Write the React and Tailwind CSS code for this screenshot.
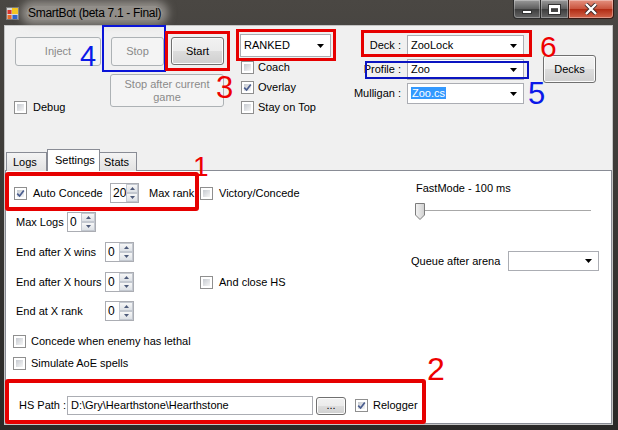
import React from "react";

const BTN =
  "flex items-center justify-center rounded-[3px] border border-[#707070] bg-[linear-gradient(#f2f2f2_0%,#ebebeb_50%,#dddddd_50%,#cfcfcf_100%)] shadow-[inset_0_0_0_1px_#fcfcfc] text-black";
const BTN_OFF =
  "flex items-center justify-center rounded-[3px] border border-[#adb2b5] bg-[#f4f4f4] text-[#8a8a8a] text-center";

function Check({ on }) {
  return (
    <span className="flex h-[13px] w-[13px] shrink-0 border border-[#8f8f8f] bg-white p-[2px]">
      <span className="relative flex h-full w-full bg-linear-to-br from-[#c6cad0] to-[#f6f6f6]">
        {on && (
          <svg className="absolute -left-[1px] -top-[1px]" width="9" height="9" viewBox="0 0 9 9">
            <path d="M1.2 4.6 L3.6 7 L7.8 1.4" stroke="#4a5d8f" strokeWidth="1.7" fill="none" />
          </svg>
        )}
      </span>
    </span>
  );
}

function Arrow() {
  return (
    <svg width="7" height="4" viewBox="0 0 7 4" className="shrink-0">
      <path d="M0 0H7L3.5 4Z" fill="#000" />
    </svg>
  );
}

function Combo({ children, className }) {
  return (
    <div className={`flex items-center border border-[#abadb3] bg-white pr-[6px] ${className}`}>
      <div className="flex-1 pl-[3px]">{children}</div>
      <Arrow />
    </div>
  );
}

function SpinBtn({ up }) {
  return (
    <div className="flex flex-1 items-center justify-center border border-[#c3c8d0] bg-linear-to-b from-[#f7f7f7] to-[#dde1e6]">
      <svg width="5" height="3" viewBox="0 0 5 3">
        <path d={up ? "M0 3H5L2.5 0Z" : "M0 0H5L2.5 3Z"} fill="#4e5b7a" />
      </svg>
    </div>
  );
}

function Spin({ value }) {
  return (
    <div className="flex h-[20px] w-[29px] shrink-0 border border-[#abadb3] bg-white">
      <span className="flex-1 pl-[2px] text-[12px] leading-[18px]">{value}</span>
      <div className="flex w-[14px] flex-col">
        <SpinBtn up />
        <SpinBtn />
      </div>
    </div>
  );
}

export default function App() {
  return (
    <div className="relative h-[430px] w-[618px] overflow-hidden bg-linear-to-b from-[#4a4743] to-[#2a2927] font-['Liberation_Sans',Arial,sans-serif] text-[11px] leading-[13px] text-black">
      {/* title bar */}
      <div className="flex h-[25px] items-start">
        <svg className="ml-[6px] mt-[7px]" width="13" height="13" viewBox="0 0 13 13">
          <rect x="0.5" y="0.5" width="12" height="12" fill="#d8d8d8" stroke="#7a7a7a" />
          <rect x="6" y="1" width="6" height="6" fill="#f4c51c" />
          <rect x="1.5" y="3" width="4" height="4" fill="#d9342b" />
          <rect x="1.5" y="8" width="4" height="4" fill="#e86a2a" />
          <rect x="6.5" y="8" width="5" height="4" fill="#2f63c8" />
        </svg>
        <span className="ml-[7px] mt-[6px] rounded-full bg-[rgba(205,202,196,0.55)] px-[2px] text-[12px] leading-[14px] tracking-[-0.3px] shadow-[0_0_8px_5px_rgba(205,202,196,0.55)]">
          SmartBot (beta 7.1 - Final)
        </span>
        <div className="ml-auto mr-[4px] flex h-[19px]">
          <div className="flex w-[28px] items-center justify-center rounded-bl-[4px] border border-t-0 border-[#2b2b2b] bg-[linear-gradient(#9a9a9a,#5c5c5c_50%,#3c3c3c_50%,#666)] shadow-[inset_0_0_0_1px_rgba(255,255,255,0.3)]">
            <span className="mt-[6px] h-[4px] w-[10px] border border-[#333] bg-white" />
          </div>
          <div className="flex w-[27px] items-center justify-center border-b border-[#2b2b2b] bg-[linear-gradient(#9a9a9a,#5c5c5c_50%,#3c3c3c_50%,#666)] shadow-[inset_0_0_0_1px_rgba(255,255,255,0.3)]">
            <span className="h-[9px] w-[11px] border-[2px] border-t-[3px] border-white outline outline-[#333]" />
          </div>
          <div className="flex w-[46px] items-center justify-center rounded-br-[4px] border border-t-0 border-[#3a1a14] bg-[linear-gradient(#e4917f,#c9533c_50%,#b02a12_50%,#d2644a)] shadow-[inset_0_0_0_1px_rgba(255,255,255,0.35)]">
            <svg width="14" height="12" viewBox="0 0 14 12">
              <path d="M2 1L12 11M12 1L2 11" stroke="#3a2a2a" strokeWidth="4" />
              <path d="M2 1L12 11M12 1L2 11" stroke="#fff" strokeWidth="2.4" />
            </svg>
          </div>
        </div>
      </div>

      {/* client area */}
      <div className="ml-[4px] flex h-[400px] w-[609px] flex-col border border-[#c4c4c4] bg-[#f0f0f0]">
        {/* top controls */}
        <div className="flex h-[123px] items-start">
          <div className="ml-[9px] flex w-[87px] flex-col">
            <div className={`${BTN_OFF} ml-[1px] mt-[11px] h-[29px] w-[86px]`}>Inject</div>
            <div className="mt-[35px] flex items-center">
              <Check />
              <span className="ml-[6px]">Debug</span>
            </div>
          </div>

          <div className="ml-[9px] flex w-[114px] flex-col">
            <div className="mt-[11px] flex">
              <div className={`${BTN_OFF} ml-[1px] h-[29px] w-[53px]`}>Stop</div>
              <div className={`${BTN} ml-[7px] h-[28px] w-[53px]`}>Start</div>
            </div>
            <div className={`${BTN_OFF} mt-[8px] h-[33px] w-[114px] leading-[13px]`}>
              Stop after current
              <br />
              game
            </div>
          </div>

          <div className="ml-[16px] flex w-[91px] flex-col">
            <Combo className="mt-[8px] h-[23px]">RANKED</Combo>
            <div className="ml-[1px] mt-[4px] flex items-center">
              <Check />
              <span className="ml-[4px]">Coach</span>
            </div>
            <div className="ml-[1px] mt-[7px] flex items-center">
              <Check on />
              <span className="ml-[4px]">Overlay</span>
            </div>
            <div className="ml-[1px] mt-[7px] flex items-center">
              <Check />
              <span className="ml-[4px]">Stay on Top</span>
            </div>
          </div>

          <div className="ml-[20px] mt-[9px] flex flex-col gap-[3px]">
            {[
              ["Deck :", "ZooLock"],
              ["Profile :", "Zoo"],
              ["Mulligan :", null],
            ].map(([label, value]) => (
              <div key={label} className="flex h-[21px] items-center">
                <span className="w-[50px] whitespace-nowrap text-right">{label}</span>
                <Combo className="ml-[6px] h-[21px] w-[117px]">
                  {value ?? <span className="bg-[#3399ff] px-[1px] text-white">Zoo.cs</span>}
                </Combo>
              </div>
            ))}
          </div>

          <div className={`${BTN} ml-[19px] mt-[29px] h-[28px] w-[53px]`}>Decks</div>
        </div>

        {/* tabs */}
        <div className="relative z-10 flex h-[21px] items-end pl-[1px]">
          <div className="-mb-px flex h-[19px] w-[41px] items-center border border-b-0 border-[#898c95] bg-linear-to-b from-[#f4f4f4] to-[#e2e2e2] pl-[6px]">
            Logs
          </div>
          <div className="-mb-px flex h-[22px] w-[53px] items-center border border-b-0 border-[#898c95] bg-white pl-[7px]">
            Settings
          </div>
          <div className="-mb-px flex h-[19px] w-[37px] items-center border border-b-0 border-l-0 border-[#898c95] bg-linear-to-b from-[#f4f4f4] to-[#e2e2e2] pl-[4px]">
            Stats
          </div>
        </div>

        {/* tab page */}
        <div className="flex flex-1 flex-col border border-[#898c95] bg-white">
          <div className="flex flex-1">
            <div className="flex w-[405px] flex-col">
              <div className="mt-[12px] flex h-[20px] items-center pl-[8px]">
                <Check on />
                <span className="ml-[6px] w-[77px]">Auto Concede</span>
                <Spin value="20" />
                <span className="ml-[10px] w-[51px]">Max rank</span>
                <Check />
                <span className="ml-[6px]">Victory/Concede</span>
              </div>
              <div className="mt-[9px] flex h-[20px] items-center pl-[10px]">
                <span className="w-[51px]">Max Logs</span>
                <Spin value="0" />
              </div>
              <div className="mt-[10px] flex h-[20px] items-center pl-[10px]">
                <span className="w-[89px]">End after X wins</span>
                <Spin value="0" />
              </div>
              <div className="mt-[10px] flex h-[20px] items-center pl-[10px]">
                <span className="w-[89px]">End after X hours</span>
                <Spin value="0" />
                <span className="ml-[66px]">
                  <Check />
                </span>
                <span className="ml-[6px]">And close HS</span>
              </div>
              <div className="mt-[9px] flex h-[20px] items-center pl-[10px]">
                <span className="w-[89px]">End at X rank</span>
                <Spin value="0" />
              </div>
              <div className="mt-[14px] flex h-[13px] items-center pl-[7px]">
                <Check />
                <span className="ml-[5px]">Concede when enemy has lethal</span>
              </div>
              <div className="mt-[9px] flex h-[13px] items-center pl-[7px]">
                <Check />
                <span className="ml-[5px]">Simulate AoE spells</span>
              </div>
            </div>

            <div className="flex flex-1 flex-col">
              <span className="ml-[5px] mt-[11px]">FastMode - 100 ms</span>
              <div className="relative ml-[4px] mt-[8px] h-[17px] w-[176px]">
                <div className="absolute left-[1px] right-0 top-[7px] h-[2px] border-t border-[#a8a8a8] bg-white" />
                <svg className="absolute left-0 top-0" width="10" height="17" viewBox="0 0 10 17">
                  <defs>
                    <linearGradient id="th" x1="0" y1="0" x2="1" y2="0">
                      <stop offset="0" stopColor="#f4f4f4" />
                      <stop offset="1" stopColor="#cfcfcf" />
                    </linearGradient>
                  </defs>
                  <path d="M0.5 0.5H9.5V12L5 16.5L0.5 12Z" fill="url(#th)" stroke="#7c7c7c" />
                </svg>
              </div>
              <div className="mt-[31px] flex h-[20px] items-center">
                <span className="w-[97px]">Queue after arena</span>
                <Combo className="h-[20px] w-[91px]" />
              </div>
            </div>
          </div>

          <div className="mb-[8px] flex h-[19px] items-center pl-[13px]">
            <span className="w-[48px]">HS Path :</span>
            <div className="flex h-[19px] w-[246px] items-center border border-[#abadb3] bg-white pl-[3px]">
              D:\Gry\Hearthstone\Hearthstone
            </div>
            <div className={`${BTN} ml-[3px] h-[18px] w-[30px] leading-none`}>...</div>
            <span className="ml-[9px]">
              <Check on />
            </span>
            <span className="ml-[5px]">Relogger</span>
          </div>
        </div>
      </div>

      {/* annotations */}
      <div className="absolute left-[102px] top-[25px] h-[47px] w-[64px] border-2 border-[#0a14d8]" />
      <div className="absolute left-[165px] top-[31px] h-[40px] w-[65px] border-[3px] border-[#e60000]" />
      <div className="absolute left-[236px] top-[29px] h-[32px] w-[100px] border-[3px] border-[#e60000]" />
      <div className="absolute left-[361px] top-[30px] h-[27px] w-[171px] border-[3px] border-[#e60000]" />
      <div className="absolute left-[365px] top-[61px] h-[18px] w-[164px] border-2 border-[#0a14c0]" />
      <div className="absolute left-[5px] top-[172px] h-[39px] w-[194px] rounded-[3px] border-4 border-[#e60000]" />
      <div className="absolute left-[5px] top-[379px] h-[45px] w-[421px] rounded-[3px] border-4 border-[#e60000]" />

      <span className="absolute left-[80px] top-[42px] text-[29px] leading-none text-[#0a18e8]">4</span>
      <span className="absolute left-[216px] top-[72px] text-[31px] leading-none text-[#ee0000]">3</span>
      <span className="absolute left-[540px] top-[32px] text-[30px] leading-none text-[#ee0000]">6</span>
      <span className="absolute left-[528px] top-[78px] text-[31px] leading-none text-[#0a18e8]">5</span>
      <span className="absolute left-[193px] top-[153px] text-[28px] leading-none text-[#ee0000]">1</span>
      <span className="absolute left-[427px] top-[353px] text-[32px] leading-none text-[#ee0000]">2</span>
    </div>
  );
}
